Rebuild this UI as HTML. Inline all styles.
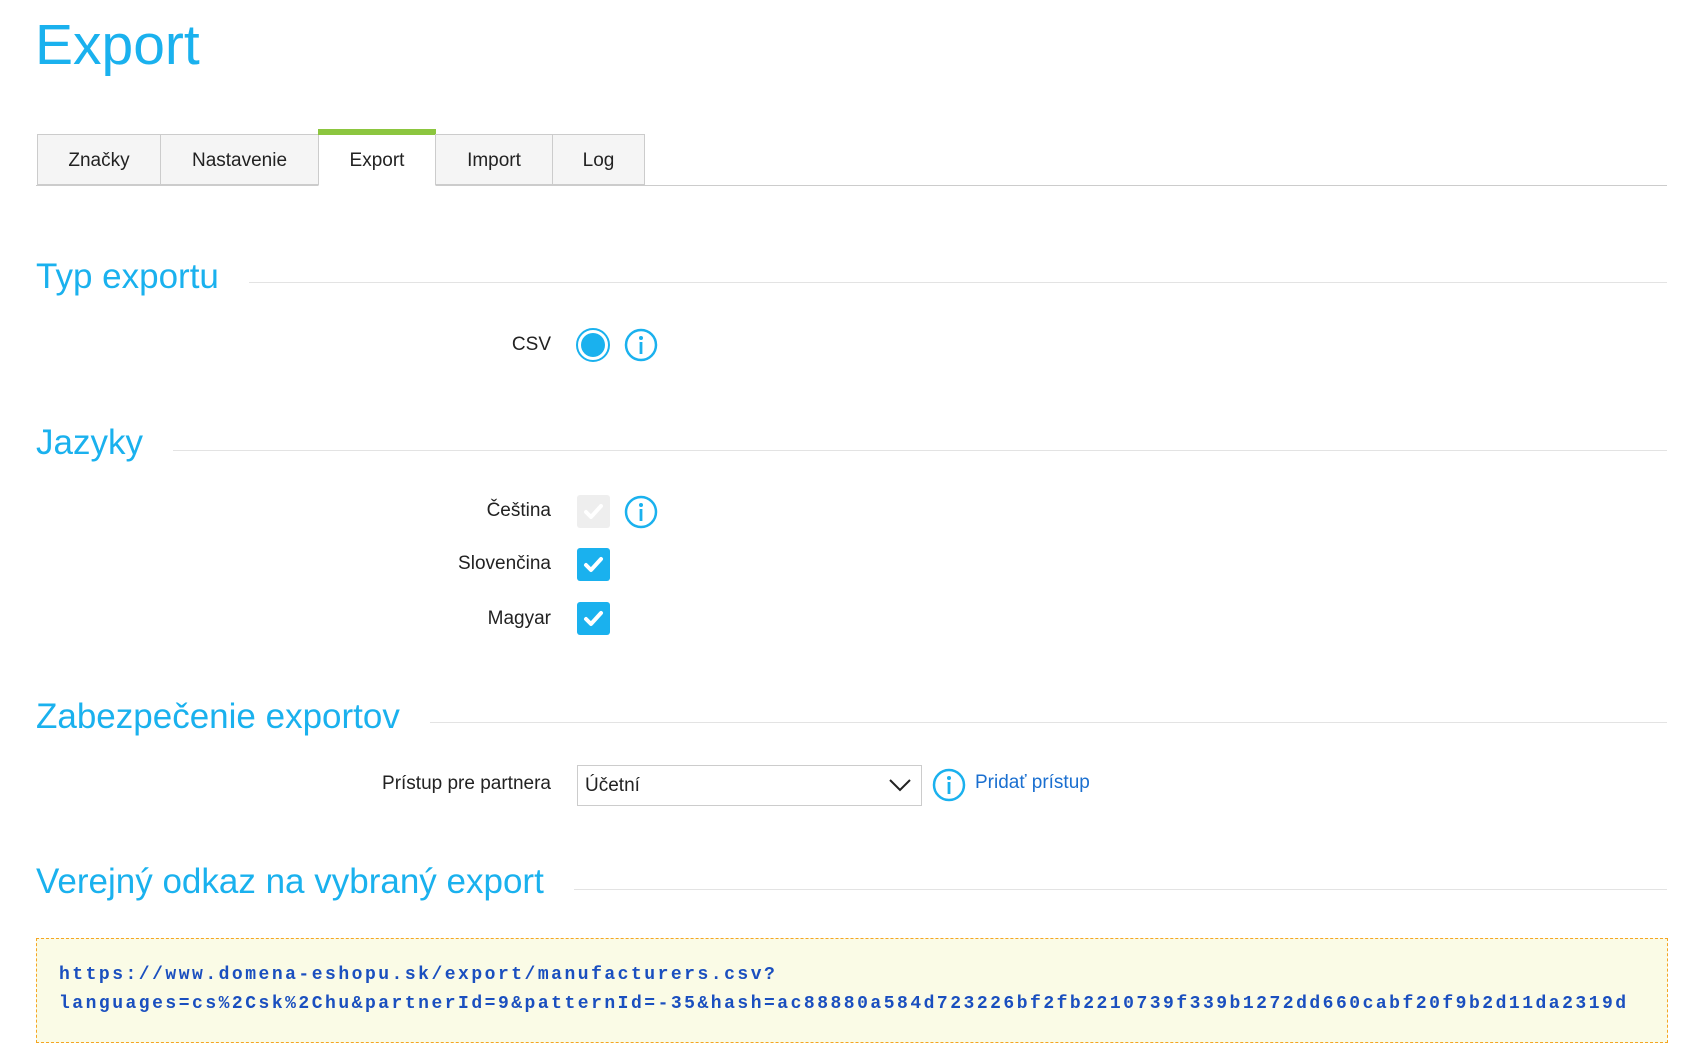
<!DOCTYPE html>
<html><head><meta charset="utf-8"><style>
body{margin:0;width:1694px;height:1061px;background:#fff;font-family:"Liberation Sans",sans-serif;color:#222;position:relative;overflow:hidden}
.a{position:absolute}
h1{position:absolute;left:35px;top:12px;margin:0;font-weight:normal;font-size:57px;color:#1ab1ee}
.tab{position:absolute;top:134px;height:51px;background:#f5f5f5;border:1px solid #ccc;box-sizing:border-box;font-size:19px;text-align:center;line-height:52px}
.h2{position:absolute;left:36px;font-size:35px;color:#1ab1ee;background:#fff;padding-right:30px;line-height:40px}
.ln{position:absolute;left:36px;width:1631px;height:0;border-top:1px solid #e3e3e3}
.lbl{position:absolute;right:1143px;font-size:19px;line-height:24px}
.cb{position:absolute;left:577px;width:33px;height:33px;border-radius:3px;background:#1ab1ee}
</style></head><body>
<h1>Export</h1>
<div class="a" style="left:36px;top:185px;width:1631px;border-top:1px solid #ccc"></div>
<div class="tab" style="left:37px;width:124px">Značky</div>
<div class="tab" style="left:160px;width:159px">Nastavenie</div>
<div class="tab" style="left:318px;width:118px;background:#fff;border-bottom-color:#fff;top:134px;height:52px">Export</div>
<div class="a" style="left:318px;top:129px;width:118px;height:6px;background:#8cc63f"></div>
<div class="tab" style="left:435px;width:118px">Import</div>
<div class="tab" style="left:552px;width:93px">Log</div>

<div class="ln" style="top:282px"></div><div class="h2" style="top:257px">Typ exportu</div>
<div class="lbl" style="top:333px">CSV</div>
<svg class="a" style="left:575px;top:327px" width="36" height="36"><circle cx="18" cy="18" r="16" fill="#fff" stroke="#1ab1ee" stroke-width="2"/><circle cx="18" cy="18" r="12" fill="#1ab1ee"/></svg>
<svg class="a" style="left:624px;top:328px" width="34" height="34"><circle cx="17" cy="17" r="15" fill="none" stroke="#1ab1ee" stroke-width="2.5"/><circle cx="17" cy="10" r="2" fill="#1ab1ee"/><rect x="15.6" y="14" width="2.8" height="12" fill="#1ab1ee"/></svg>

<div class="ln" style="top:450px"></div><div class="h2" style="top:423px">Jazyky</div>
<div class="lbl" style="top:499px">Čeština</div>
<div class="cb" style="top:495px;background:#eee"></div>
<svg class="a" style="left:577px;top:495px" width="33" height="33"><path d="M9 17l5 5 10-11" fill="none" stroke="#fff" stroke-width="4" stroke-linecap="round" stroke-linejoin="round"/></svg>
<svg class="a" style="left:624px;top:495px" width="34" height="34"><circle cx="17" cy="17" r="15" fill="none" stroke="#1ab1ee" stroke-width="2.5"/><circle cx="17" cy="10" r="2" fill="#1ab1ee"/><rect x="15.6" y="14" width="2.8" height="12" fill="#1ab1ee"/></svg>
<div class="lbl" style="top:552px">Slovenčina</div>
<div class="cb" style="top:548px"></div>
<svg class="a" style="left:577px;top:548px" width="33" height="33"><path d="M9 17l5 5 10-11" fill="none" stroke="#fff" stroke-width="4" stroke-linecap="round" stroke-linejoin="round"/></svg>
<div class="lbl" style="top:607px">Magyar</div>
<div class="cb" style="top:602px"></div>
<svg class="a" style="left:577px;top:602px" width="33" height="33"><path d="M9 17l5 5 10-11" fill="none" stroke="#fff" stroke-width="4" stroke-linecap="round" stroke-linejoin="round"/></svg>

<div class="ln" style="top:722px"></div><div class="h2" style="top:697px">Zabezpečenie exportov</div>
<div class="lbl" style="top:772px">Prístup pre partnera</div>
<div class="a" style="left:577px;top:765px;width:345px;height:41px;border:1px solid #ccc;box-sizing:border-box;font-size:19px;line-height:39px;padding-left:7px">Účetní</div>
<svg class="a" style="left:888px;top:775px" width="24" height="20"><path d="M2 5l10 10 10-10" fill="none" stroke="#222" stroke-width="2"/></svg>
<svg class="a" style="left:932px;top:768px" width="34" height="34"><circle cx="17" cy="17" r="15" fill="none" stroke="#1ab1ee" stroke-width="2.5"/><circle cx="17" cy="10" r="2" fill="#1ab1ee"/><rect x="15.6" y="14" width="2.8" height="12" fill="#1ab1ee"/></svg>
<div class="a" style="left:975px;top:772px;font-size:19px;color:#1a6fd0">Pridať prístup</div>

<div class="ln" style="top:889px"></div><div class="h2" style="top:862px">Verejný odkaz na vybraný export</div>
<div class="a" style="left:36px;top:938px;width:1632px;height:105px;box-sizing:border-box;border:1.5px dashed #f5a623;background:#fafbe6"></div>
<div class="a" style="left:59px;top:961px;font-family:'Liberation Mono',monospace;font-size:18px;letter-spacing:2.5px;font-weight:bold;color:#1a4fbf;line-height:29px;white-space:pre">https://www.domena-eshopu.sk/export/manufacturers.csv?
languages=cs%2Csk%2Chu&amp;partnerId=9&amp;patternId=-35&amp;hash=ac88880a584d723226bf2fb2210739f339b1272dd660cabf20f9b2d11da2319d</div>
</body></html>
